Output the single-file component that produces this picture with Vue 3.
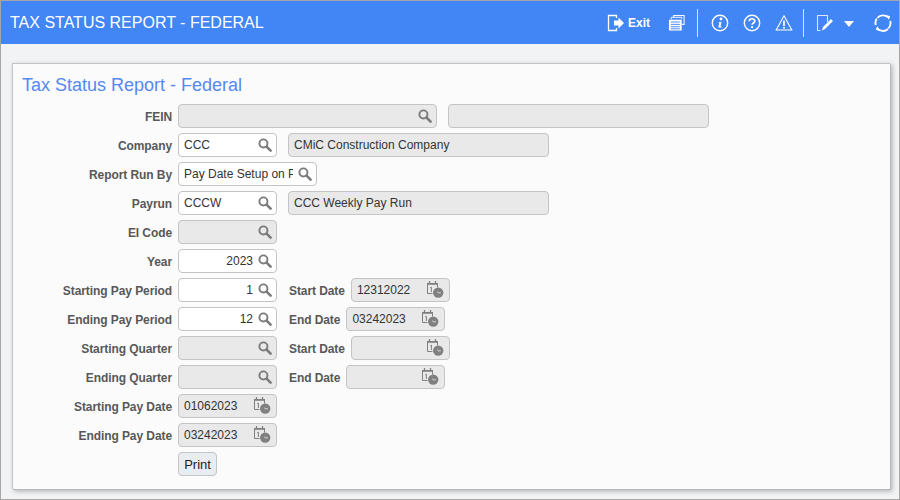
<script setup>
const rows = [
  { label: 'FEIN', w: 259, icon: 'search', ro: true, extra: [{ kind: 'desc', w: 261, gap: 11, ro: true, text: '' }] },
  { label: 'Company', w: 99, icon: 'search', value: 'CCC', extra: [{ kind: 'desc', w: 261, gap: 11, ro: true, text: 'CMiC Construction Company' }] },
  { label: 'Report Run By', w: 139, icon: 'search', value: 'Pay Date Setup on Payrun', clip: true },
  { label: 'Payrun', w: 99, icon: 'search', value: 'CCCW', extra: [{ kind: 'desc', w: 261, gap: 11, ro: true, text: 'CCC Weekly Pay Run' }] },
  { label: 'EI Code', w: 99, icon: 'search', ro: true },
  { label: 'Year', w: 99, icon: 'search', value: '2023', right: true },
  { label: 'Starting Pay Period', w: 99, icon: 'search', value: '1', right: true, extra: [{ kind: 'date', label: 'Start Date', w: 99, fgap: 6, text: '12312022' }] },
  { label: 'Ending Pay Period', w: 99, icon: 'search', value: '12', right: true, extra: [{ kind: 'date', label: 'End Date', w: 99, fgap: 6, text: '03242023' }] },
  { label: 'Starting Quarter', w: 99, icon: 'search', ro: true, extra: [{ kind: 'date', label: 'Start Date', w: 99, fgap: 6, text: '' }] },
  { label: 'Ending Quarter', w: 99, icon: 'search', ro: true, extra: [{ kind: 'date', label: 'End Date', w: 99, fgap: 6, text: '' }] },
  { label: 'Starting Pay Date', w: 99, icon: 'cal', ro: true, value: '01062023' },
  { label: 'Ending Pay Date', w: 99, icon: 'cal', ro: true, value: '03242023' },
]
</script>

<template>
  <div class="page">
    <svg class="defs" width="0" height="0" aria-hidden="true">
      <symbol id="i-search" viewBox="0 0 16 16">
        <circle cx="6.2" cy="6.2" r="4.6" fill="none" stroke="currentColor" stroke-width="2.2" />
        <path d="M9.8 9.8 14.4 14.4" stroke="currentColor" stroke-width="3" stroke-linecap="round" />
      </symbol>
      <symbol id="i-cal" viewBox="0 0 18 18">
        <path d="M1.500 3.500h10v4M1.500 3.500v10h5" fill="none" stroke="currentColor" stroke-width="1" />
        <path d="M1 3h11v1.800H1z" fill="currentColor" />
        <path d="M3.500 1v3M9.500 1v3" stroke="currentColor" stroke-width="1.300" />
        <path d="M4.200 7.800 5.400 7.200v4.800" fill="none" stroke="currentColor" stroke-width="1" />
        <circle cx="12.200" cy="12.600" r="5.200" fill="currentColor" />
        <path d="M11.200 11.800l1.400 1h2.200" fill="none" stroke="#e6e6e6" stroke-width=".9" />
      </symbol>
    </svg>

    <header class="bar">
      <h1 class="bar-title">TAX STATUS REPORT - FEDERAL</h1>
      <nav class="tools">
        <svg class="ic ic-exit" viewBox="0 0 18 18">
          <path d="M9.500 4V1.500H1.500v15h8V14" fill="none" stroke="#fff" stroke-width="1.300" />
          <path d="M7 6.500h4.500V3.500L17 9l-5.500 5.500v-3H7z" fill="#fff" />
        </svg>
        <span class="exit">Exit</span>
        <svg class="ic ic-print" viewBox="0 0 18 18">
          <path d="M6 3.500V1.500h11V11h-2" fill="none" stroke="#fff" stroke-width="1.100" />
          <path d="M3.500 5.500V3.500h11v2" fill="none" stroke="#fff" stroke-width="1" />
          <path d="M1 6h13.500v11.500H1z" fill="#fff" />
          <path d="M3 8.500h9.500M3 11h9.500M3 13.500h9.500M3 15.700h9.500" stroke="#4285f4" stroke-width="1" />
        </svg>
        <i class="sep sep-a"></i>
        <svg class="ic ic-info" viewBox="0 0 18 18">
          <circle cx="9" cy="9" r="7.700" fill="none" stroke="#fff" stroke-width="1.400" />
          <circle cx="10" cy="5" r="1.400" fill="#fff" />
          <path d="M7.500 8h3L9.500 12.500h1.300v1H7.300l1-5H7.500z" fill="#fff" />
        </svg>
        <svg class="ic ic-help" viewBox="0 0 18 18">
          <circle cx="9" cy="9" r="7.700" fill="none" stroke="#fff" stroke-width="1.400" />
          <path d="M6.300 7.200C6.300 4 11.800 4 11.800 7c0 2-2.700 1.900-2.700 3.800" fill="none" stroke="#fff" stroke-width="1.700" />
          <circle cx="9.100" cy="13.200" r="1.100" fill="#fff" />
        </svg>
        <svg class="ic ic-warn" viewBox="0 0 18 18">
          <path d="M9 1.800 16.800 16H1.200z" fill="none" stroke="#fff" stroke-width="1.100" />
          <path d="M9 6.500v5.500" stroke="#fff" stroke-width="1.700" />
          <circle cx="9" cy="13.800" r="1" fill="#fff" />
        </svg>
        <i class="sep sep-b"></i>
        <svg class="ic ic-edit" viewBox="0 0 18 18">
          <path d="M11.500 8V1.500h-10v15h3" fill="none" stroke="#fff" stroke-opacity=".8" stroke-width="1.100" />
          <path d="M6 16.500 7 13 15 5l2 2-8 8z" fill="#fff" />
        </svg>
        <svg class="ic-caret" viewBox="0 0 10 6"><path d="M0 0h10L5 6z" fill="#fff" /></svg>
        <svg class="ic ic-sync" viewBox="0 0 18 18">
          <path d="M3.500 3.800A7.500 7.500 0 0 1 14 3.300M16.200 7A7.500 7.500 0 0 1 14.400 14.300M14 15A7.500 7.500 0 0 1 3 14M1.800 11A7.500 7.500 0 0 1 2.800 4.500" fill="none" stroke="#fff" stroke-width="1.900" />
          <path d="M12 1l4.200 1.200-1.400 3.600zM6 17l-4.200-1.200 1.400-3.600z" fill="#fff" />
        </svg>
      </nav>
    </header>

    <main class="content">
      <section class="card">
        <h2 class="card-title">Tax Status Report - Federal</h2>
        <div class="form">
          <div v-for="row in rows" :key="row.label" class="row">
            <label class="lbl">{{ row.label }}</label>
            <div class="field" :class="{ ro: row.ro }" :style="{ width: row.w + 'px' }">
              <span class="val" :class="{ right: row.right }">{{ row.value }}</span>
              <svg v-if="row.icon === 'search'" class="sic"><use href="#i-search" /></svg>
              <svg v-else class="cic"><use href="#i-cal" /></svg>
            </div>
            <template v-for="ex in row.extra || []" :key="ex.kind">
              <div v-if="ex.kind === 'desc'" class="field ro" :style="{ width: ex.w + 'px', marginLeft: ex.gap + 'px' }">
                <span class="val">{{ ex.text }}</span>
              </div>
              <template v-else>
                <label class="lbl2">{{ ex.label }}</label>
                <div class="field ro" :style="{ width: ex.w + 'px', marginLeft: ex.fgap + 'px' }">
                  <span class="val">{{ ex.text }}</span>
                  <svg class="cic"><use href="#i-cal" /></svg>
                </div>
              </template>
            </template>
          </div>
          <div class="row">
            <span class="lbl"></span>
            <button class="btn" type="button">Print</button>
          </div>
        </div>
      </section>
    </main>
  </div>
</template>

<style>
html, body { margin: 0; padding: 0; }
</style>

<style scoped>
.page {
  width: 900px;
  height: 500px;
  box-sizing: border-box;
  border: 1px solid #a6a6a6;
  background: #f2f3f5;
  display: flex;
  flex-direction: column;
  font-family: "Liberation Sans", Arial, sans-serif;
  overflow: hidden;
}
.defs { position: absolute; }
.bar {
  height: 43px;
  flex: none;
  background: #4285f4;
  display: flex;
  align-items: center;
  justify-content: space-between;
  padding: 0 7px 0 9px;
  color: #fff;
}
.bar-title { margin: 0; font-size: 16px; font-weight: 400; }
.tools { display: flex; align-items: center; }
.ic { width: 18px; height: 18px; display: block; }
.exit { font-size: 12px; font-weight: 700; margin: 0 18px 0 3px; }
.ic-print { width: 17px; height: 17px; }
.sep { width: 1px; height: 28px; background: #d5e3fb; display: block; }
.sep-a { margin: 0 13px 0 12px; }
.ic-help { margin-left: 14px; }
.ic-warn { margin-left: 14px; }
.sep-b { margin: 0 12px 0 10px; }
.ic-caret { width: 10px; height: 6px; margin: 2px 0 0 10px; display: block; }
.ic-sync { margin-left: 20px; }
.content { flex: 1; padding: 19px 9px 10px 11px; display: flex; min-height: 0; }
.card {
  flex: 1;
  background: #fbfbfb;
  border: 1px solid #c4c4c4;
  border-width: 1px 0 0 1px;
  box-shadow: 1px 1px 0 #b8b8b8, 2px 2px 5px rgba(0, 0, 0, .3);
  padding: 10px 0 0 9px;
}
.card-title { margin: 0; font-size: 18px; line-height: 23px; font-weight: 400; color: #5488f2; }
.form { margin-top: 7px; display: flex; flex-direction: column; gap: 5px; margin-left: -9px; }
.row { display: flex; align-items: center; height: 24px; }
.lbl { width: 159px; margin-right: 6px; padding-top: 2px; text-align: right; font-size: 12px; font-weight: 700; letter-spacing: -.08px; color: #585858; flex: none; }
.lbl2 { margin-left: 12px; padding-top: 2px; font-size: 12px; font-weight: 700; letter-spacing: -.08px; color: #585858; flex: none; }
.field {
  height: 24px;
  box-sizing: border-box;
  flex: none;
  background: #fff;
  border: 1px solid #c4c4c4;
  border-radius: 4px;
  display: flex;
  align-items: center;
  padding: 0 4px 0 5px;
  gap: 5px;
}
.field.ro { background: #e9e9e9; }
.val { flex: 1; min-width: 0; font-size: 12px; color: #333; white-space: nowrap; overflow: hidden; }
.val.right { text-align: right; }
.sic { width: 14px; height: 14px; color: #7b7b7b; flex: none; }
.cic { width: 18px; height: 18px; color: #808080; flex: none; margin: -2px 1px 0 0; }
.btn {
  height: 24px;
  width: 39px;
  padding: 0;
  box-sizing: border-box;
  border: 1px solid #c4c4c4;
  border-radius: 4px;
  background: #e9edf1;
  font: 400 13px "Liberation Sans", Arial, sans-serif;
  color: #222;
}
</style>
